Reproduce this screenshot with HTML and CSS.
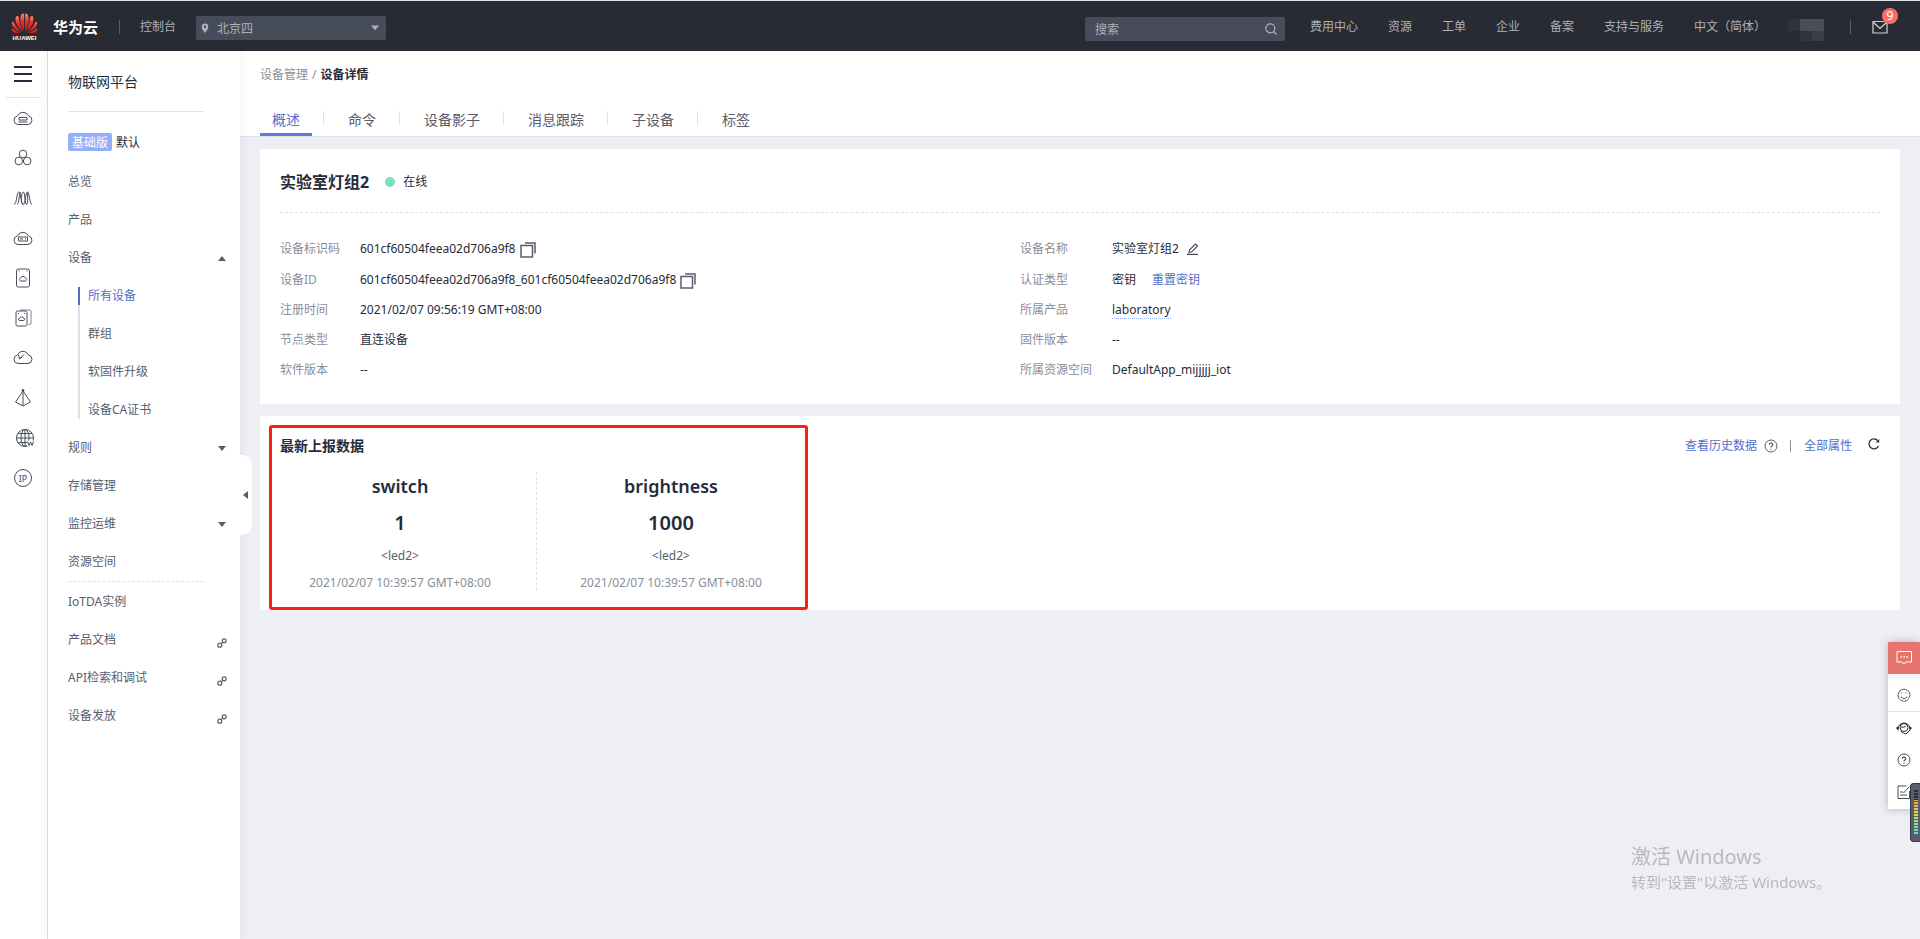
FILE: index.html
```html
<!DOCTYPE html>
<html lang="zh-CN">
<head>
<meta charset="utf-8">
<title>设备详情 - 物联网平台</title>
<link rel="stylesheet" href="styles.css">
</head>
<body>
<svg class="defs" aria-hidden="true">
  <symbol id="i-copy" viewBox="0 0 16 16"><path d="M1 3.500h11.500V15H1zM5 1h10v10.500" fill="none" stroke="#575d6c" stroke-width="1.500"/></symbol>
  <symbol id="i-link" viewBox="0 0 10 10"><g fill="none" stroke="#575d6c" stroke-width="1.200"><circle cx="7.200" cy="2.800" r="2"/><circle cx="2.800" cy="7.200" r="2"/><path d="M3.800 6.200l2.400-2.400"/></g></symbol>
  <symbol id="i-help" viewBox="0 0 14 14"><circle cx="7" cy="7" r="6" fill="none" stroke="currentColor"/><path d="M5.300 5.700a1.700 1.700 0 1 1 2.600 1.400q-.9.500-.9 1.400M7 9.700v1.100" fill="none" stroke="currentColor" stroke-width="1.200"/></symbol>
  <symbol id="i-down" viewBox="0 0 8 5"><path d="M0 0h8L4 5z" fill="currentColor"/></symbol>
  <symbol id="i-up" viewBox="0 0 8 5"><path d="M0 5h8L4 0z" fill="currentColor"/></symbol>
  <symbol id="i-cloud" viewBox="0 0 20 16"><path d="M5 14.500a4.300 4.300 0 0 1-.6-8.500A6 6 0 0 1 15.500 6a4.300 4.300 0 0 1-.5 8.500z"/></symbol>
</svg>

<header class="topbar">
  <a class="brand" href="#">
    <span class="brand-logo">
      <svg class="brand-mark" viewBox="0 0 27 21">
        <defs><linearGradient id="petal" x1="0" y1="0" x2="0" y2="1"><stop offset="0" stop-color="#f58a6c"/><stop offset=".45" stop-color="#e2312a"/><stop offset="1" stop-color="#c9141c"/></linearGradient></defs>
        <g fill="url(#petal)">
          <path d="M13 18.500C9.500 12 8 5 10.500 1.200Q12 .2 13 .7z"/>
          <path d="M14 18.500C17.500 12 19 5 16.500 1.200Q15 .2 14 .7z"/>
          <path d="M12 18.800C6 14 3 8 5.200 3.200Q7 2.500 7.800 4.500C8.500 10 10 14 12 18.800z"/>
          <path d="M15 18.800C21 14 24 8 21.800 3.200Q20 2.500 19.200 4.500C18.500 10 17 14 15 18.800z"/>
          <path d="M11 19.200C5 18 0 14 1 8.500Q2.500 8.800 3.500 10.500C5.500 14.500 8 17 11 19.200z"/>
          <path d="M16 19.200C22 18 27 14 26 8.500Q24.500 8.800 23.500 10.500C21.500 14.500 19 17 16 19.200z"/>
          <path d="M10.500 20H3.500Q1 18.500.5 15.500Q5 18.500 10.500 20z"/>
          <path d="M16.500 20H23.500Q26 18.500 26.500 15.500Q22 18.500 16.500 20z"/>
        </g>
      </svg>
      <span class="brand-word">HUAWEI</span>
    </span>
    <span class="brand-name">华为云</span>
  </a>
  <span class="bar-sep"></span>
  <a class="console" href="#">控制台</a>
  <label class="region">
    <svg class="pin" viewBox="0 0 8 10"><path d="M4 10C2 7.500.7 5.800.7 3.800a3.300 3.300 0 0 1 6.600 0C7.300 5.800 6 7.500 4 10z" fill="#adb0b8"/><circle cx="4" cy="3.800" r="1.200" fill="#464c59"/></svg>
    <select aria-label="区域"><option>北京四</option></select>
    <svg class="caret" aria-hidden="true"><use href="#i-down"/></svg>
  </label>
  <div class="search">
    <input type="text" placeholder="搜索" aria-label="搜索">
    <svg class="search-icon" viewBox="0 0 12 12"><circle cx="5.300" cy="5.300" r="4.500" fill="none" stroke="#adb0b8" stroke-width="1.200"/><path d="M8.500 8.500l3 3" stroke="#adb0b8" stroke-width="1.200"/></svg>
  </div>
  <nav class="topnav">
    <a href="#">费用中心</a><a href="#">资源</a><a href="#">工单</a><a href="#">企业</a><a href="#">备案</a><a href="#">支持与服务</a><a href="#">中文（简体）</a>
  </nav>
  <svg class="account" viewBox="0 0 36 22"><path d="M0 0h12v12H0zM12 12h12v10H12z" fill="#30333b"/><path d="M12 0h24v12H12z" fill="#4b4e56"/><path d="M24 12h12v10H24z" fill="#3b3e46"/></svg>
  <span class="bar-sep"></span>
  <button class="mail" aria-label="消息">
    <svg viewBox="0 0 16 14"><path d="M1 1.500h14v11.500H1zM1 2l7 6.500L15 2" fill="none" stroke="#d0d2d8" stroke-width="1.200"/></svg>
    <span class="badge">9</span>
  </button>
</header>

<div class="layout">
  <nav class="rail" aria-label="服务列表">
    <button class="burger" aria-label="菜单"><svg viewBox="0 0 18 16"><path d="M0 1h18M0 8h18M0 15h18" stroke="#252b3a" stroke-width="2"/></svg></button>
    <a href="#" aria-label="弹性云服务器"><svg viewBox="0 0 20 20"><use href="#i-cloud" y="2" width="20" height="16"/><path d="M6 9.500h8v2.500H6zM5.500 14h9"/></svg></a>
    <a href="#" aria-label="容器"><svg viewBox="0 0 20 20"><circle cx="10" cy="6" r="3.800"/><circle cx="5.800" cy="13" r="3.800"/><circle cx="14.200" cy="13" r="3.800"/></svg></a>
    <a href="#" aria-label="弹性伸缩"><svg viewBox="0 0 20 20"><path d="M1 16.500C4 16 3.500 4 5.800 4S8 16.500 10.200 16.500 12.500 4 14.500 4 16.500 16 19 16.500"/><path d="M4 16.500C6.500 16 5.800 4 8 4M9.800 16.500C7.500 16 8 4 10.200 4S11.500 16.500 13.500 16.500 14 4 15 4"/></svg></a>
    <a href="#" aria-label="裸金属服务器"><svg viewBox="0 0 20 20"><use href="#i-cloud" y="2" width="20" height="16"/><path d="M5.500 9h9v4h-9zM7 11h3M12 11h1"/></svg></a>
    <a href="#" aria-label="云硬盘"><svg viewBox="0 0 20 20"><rect x="3.500" y="1" width="13" height="18" rx="2"/><path d="M7.500 13a1.600 1.600 0 0 1 0-3 2.700 2.700 0 0 1 5 0 1.600 1.600 0 0 1 0 3zM5.500 3h1M13.500 3h1"/></svg></a>
    <a href="#" aria-label="云备份"><svg viewBox="0 0 20 20"><rect x="3" y="3" width="11" height="15" rx="1.500"/><path d="M7 2h9.500a1.500 1.500 0 0 1 1.500 1.500V15a1.500 1.500 0 0 1-1.500 1.500h-1" opacity=".7"/><path d="M6.800 12.500a1.200 1.200 0 0 1 0-2.400 1.900 1.900 0 0 1 3.600 0 1.200 1.200 0 0 1 0 2.400zM5 5.500h1M11 5.500h1"/></svg></a>
    <a href="#" aria-label="云数据库"><svg viewBox="0 0 20 20"><use href="#i-cloud" y="1" width="20" height="16"/><path d="M5.500 7l1 4L11 6.500M6.500 11L9 9"/></svg></a>
    <a href="#" aria-label="虚拟私有云"><svg viewBox="0 0 20 20"><path d="M10 3L2.500 14l7.500 4 7.500-4zM10 3v15"/><circle cx="10" cy="2.500" r="1" fill="#464c59"/></svg></a>
    <a class="shifted" href="#" aria-label="域名注册"><svg viewBox="0 0 20 20"><circle cx="10" cy="10" r="8.500"/><ellipse cx="10" cy="10" rx="4" ry="8.500"/><path d="M1.500 10h17M3 5.500h14M3 14.500h9M10 1.500v17"/><path d="M12 12.500h7v6h-7z" fill="#fff" stroke="none"/><path d="M12.500 13.500l1.500 4 1.500-3.500 1.500 3.500 1.500-4"/></svg></a>
    <a href="#" aria-label="弹性公网IP"><svg viewBox="0 0 20 20"><circle cx="10" cy="10" r="8.500"/><text x="10" y="13.500" text-anchor="middle" font-size="9">IP</text></svg></a>
  </nav>

  <aside class="sidebar">
    <h1>物联网平台</h1>
    <div class="edition"><span class="tag">基础版</span>默认</div>
    <nav class="menu">
      <a href="#">总览</a>
      <a href="#">产品</a>
      <a href="#">设备<svg class="arrow"><use href="#i-up"/></svg></a>
      <div class="submenu">
        <a class="current" href="#">所有设备</a>
        <a href="#">群组</a>
        <a href="#">软固件升级</a>
        <a href="#">设备CA证书</a>
      </div>
      <a href="#">规则<svg class="arrow"><use href="#i-down"/></svg></a>
      <a href="#">存储管理</a>
      <a href="#">监控运维<svg class="arrow"><use href="#i-down"/></svg></a>
      <a href="#">资源空间</a>
      <hr>
      <a href="#">IoTDA实例</a>
      <a href="#">产品文档<svg class="ext"><use href="#i-link"/></svg></a>
      <a href="#">API检索和调试<svg class="ext"><use href="#i-link"/></svg></a>
      <a href="#">设备发放<svg class="ext"><use href="#i-link"/></svg></a>
    </nav>
    <button class="collapse" aria-label="收起"><svg viewBox="0 0 5 8"><path d="M5 0v8L0 4z" fill="#575d6c"/></svg></button>
  </aside>

  <main class="main">
    <div class="page-head">
      <div class="crumbs"><a href="#">设备管理</a><span>/</span><strong>设备详情</strong></div>
      <nav class="tabs">
        <a class="active" href="#">概述</a><a href="#">命令</a><a href="#">设备影子</a><a href="#">消息跟踪</a><a href="#">子设备</a><a href="#">标签</a>
      </nav>
    </div>

    <section class="card device">
      <div class="device-head"><h2>实验室灯组2</h2><span class="status">在线</span></div>
      <div class="details">
        <dl>
          <div class="tall"><dt>设备标识码</dt><dd>601cf60504feea02d706a9f8<button aria-label="复制"><svg class="copy"><use href="#i-copy"/></svg></button></dd></div>
          <div><dt>设备ID</dt><dd>601cf60504feea02d706a9f8_601cf60504feea02d706a9f8<button aria-label="复制"><svg class="copy"><use href="#i-copy"/></svg></button></dd></div>
          <div><dt>注册时间</dt><dd>2021/02/07 09:56:19 GMT+08:00</dd></div>
          <div><dt>节点类型</dt><dd>直连设备</dd></div>
          <div><dt>软件版本</dt><dd>--</dd></div>
        </dl>
        <dl class="wide">
          <div class="tall"><dt>设备名称</dt><dd>实验室灯组2<button class="rename" aria-label="编辑"><svg class="edit" viewBox="0 0 12 12"><path d="M2 9.500l.6-2.800L8.500 1l2 2-5.800 5.800zM0 11.300h11" fill="none" stroke="#464c59" stroke-width="1.200"/></svg></button></dd></div>
          <div><dt>认证类型</dt><dd>密钥<a class="reset" href="#">重置密钥</a></dd></div>
          <div><dt>所属产品</dt><dd><a class="dotted" href="#">laboratory</a></dd></div>
          <div><dt>固件版本</dt><dd>--</dd></div>
          <div><dt>所属资源空间</dt><dd>DefaultApp_mijjjjj_iot</dd></div>
        </dl>
      </div>
    </section>

    <section class="card report">
      <div class="latest">
        <h3>最新上报数据</h3>
        <div class="stats">
          <div class="stat"><div class="name">switch</div><div class="value">1</div><div class="service">&lt;led2&gt;</div><div class="time">2021/02/07 10:39:57 GMT+08:00</div></div>
          <div class="stat"><div class="name">brightness</div><div class="value">1000</div><div class="service">&lt;led2&gt;</div><div class="time">2021/02/07 10:39:57 GMT+08:00</div></div>
        </div>
      </div>
      <div class="actions">
        <a href="#">查看历史数据</a>
        <svg class="help"><use href="#i-help"/></svg>
        <span class="pipe"></span>
        <a href="#">全部属性</a>
        <button aria-label="刷新"><svg viewBox="0 0 12 12"><path d="M10.500 8A5 5 0 1 1 9.800 2.600" fill="none" stroke="#252b3a" stroke-width="1.300"/><path d="M11.200 1v3.500H7.700z" fill="#252b3a"/></svg></button>
      </div>
    </section>
  </main>
</div>

<div class="dock">
  <button class="chat" aria-label="咨询"><svg viewBox="0 0 16 16"><path d="M1 1.500h14.500v10.500h-5.500l-2 2-2-2H1z" fill="none" stroke="#fff"/><path d="M4.500 7h1.500M7.500 7H9M10.500 7H12" stroke="#fff" stroke-width="1.500"/></svg></button>
  <div class="tools">
    <button class="face" aria-label="评价"><svg viewBox="0 0 14 14"><path d="M11.500 11.200A6 6 0 1 1 13 7.500" fill="none" stroke="#575d6c"/><path d="M4 8.500a3.200 3.200 0 0 0 6 0M4.500 4.500v1M9 4.500v1M13 7.500l-1.500 3" fill="none" stroke="#575d6c"/></svg></button>
    <button aria-label="客服"><svg class="headset" viewBox="0 0 16 14"><circle cx="8" cy="6.500" r="4" fill="none" stroke="#252b3a"/><path d="M2 8a6 6 0 0 1 12 0M5 10.500q3 2 5 2.500l4-4" fill="none" stroke="#252b3a"/><path d="M0 7l2.500-2v5zM16 7l-2.500-2v5z" fill="#252b3a"/><path d="M5 6q3 1 5-1" fill="none" stroke="#252b3a"/></svg></button>
    <button aria-label="帮助"><svg><use href="#i-help"/></svg></button>
    <button aria-label="反馈"><svg viewBox="0 0 14 14"><path d="M9.500 1H1v12.500h11.500V6M6.500 8L12.500 1.500M3 7h3M3 10h7" fill="none" stroke="#464c59"/></svg></button>
  </div>
</div>
<div class="meter"><span></span></div>
<div class="watermark"><p class="wm-title">激活 Windows</p><p>转到"设置"以激活 Windows。</p></div>
</body>
</html>
```
FILE: styles.css
```css
* { box-sizing: border-box; }
body, h1, h2, h3, p, dl, dd { margin: 0; }
body {
  min-height: 100vh;
  display: flex;
  flex-direction: column;
  background: #eeeff5;
  color: #252b3a;
  font: 12px/18px "Noto Sans", "Noto Sans CJK SC", sans-serif;
}
a { color: inherit; text-decoration: none; }
button { display: flex; padding: 0; border: 0; background: none; color: inherit; font: inherit; }
svg { display: block; flex: none; }
.defs { position: absolute; width: 0; height: 0; }

/* top bar */
.topbar {
  display: flex;
  align-items: center;
  height: 51px;
  padding: 2px 32px 0 11px;
  border-top: 1px solid #dfe5e5;
  background: #282b33;
  color: #adb0b8;
}
.topbar > * { flex: none; }
.brand { display: flex; align-items: center; gap: 15px; }
.brand-logo { display: flex; flex-direction: column; align-items: center; width: 27px; }
.brand-mark { width: 27px; height: 21px; }
.brand-word { color: #fff; font: 700 6px/8px "Liberation Sans", sans-serif; }
.brand-name { color: #fff; font-size: 15px; font-weight: 700; }
.bar-sep { width: 1px; height: 14px; background: #575d6c; }
.brand + .bar-sep { margin: 0 20px 0 21px; }
.region {
  position: relative;
  display: flex;
  align-items: center;
  width: 190px;
  height: 24px;
  margin: 2px 0 0 20px;
  padding-left: 5px;
  border-radius: 2px;
  background: #464c59;
}
.pin { width: 8px; height: 10px; }
.region select {
  flex: 1;
  height: 24px;
  padding: 2px 0 0 8px;
  appearance: none;
  border: 0;
  background: none;
  color: #adb0b8;
  font: inherit;
}
.caret { position: absolute; right: 7px; width: 8px; height: 6px; }
.search {
  display: flex;
  align-items: center;
  width: 200px;
  height: 24px;
  margin: 4px 25px 0 auto;
  padding: 0 8px 0 10px;
  border-radius: 2px;
  background: #464c59;
}
.search input { flex: 1; min-width: 0; padding: 2px 0 0; border: 0; outline: 0; background: none; color: inherit; font: inherit; }
.search input::placeholder { color: #adb0b8; }
.search-icon { width: 12px; height: 12px; }
.topnav { display: flex; gap: 30px; }
.account { width: 36px; height: 22px; margin: 6px 26px 0 22px; }
.mail { position: relative; margin-left: 21px; }
.mail svg { width: 16px; height: 14px; }
.badge {
  position: absolute;
  top: -12px;
  right: -10px;
  width: 16px;
  height: 16px;
  border-radius: 8px;
  background: #f66f6a;
  color: #fff;
  line-height: 16px;
  text-align: center;
}

/* columns */
.layout { display: flex; flex: 1; }
.rail {
  display: flex;
  flex: none;
  flex-direction: column;
  align-items: center;
  width: 48px;
  padding-right: 1px;
  border-right: 1px solid #dfe1e6;
  background: #fff;
}
.burger { justify-content: center; width: 35px; height: 47px; padding-top: 15px; border-bottom: 1px solid #dfe1e6; }
.burger svg { width: 18px; height: 16px; }
.rail a { display: flex; align-items: center; height: 40px; }
.rail a svg { width: 20px; height: 20px; fill: none; stroke: #464c59; }
.rail text { fill: #464c59; stroke: none; }
.rail .shifted { padding-left: 4px; }
.sidebar {
  position: relative;
  flex: none;
  width: 192px;
  padding: 0 14px 0 20px;
  background: #fff;
  box-shadow: 0 0 10px rgba(37, 43, 58, .08);
}
.sidebar h1 { width: 136px; height: 61px; padding-top: 20px; border-bottom: 1px solid #dfe1e6; font-size: 14px; font-weight: 400; line-height: 22px; }
.edition { display: flex; gap: 4px; margin-top: 21px; line-height: 20px; }
.tag { height: 18px; padding: 0 4px; border-radius: 2px; background: #96adfa; color: #fff; }
.menu { padding-top: 10px; color: #575d6c; }
.menu a { display: flex; align-items: center; justify-content: space-between; height: 38px; }
.menu hr { width: 136px; margin: 0 0 1px; border: 0; border-top: 1px dashed #dfe1e6; }
.arrow { width: 8px; height: 5px; }
.ext { width: 10px; height: 10px; margin: 6px -1px 0 0; }
.submenu { position: relative; padding-left: 20px; }
.submenu::before { content: ""; position: absolute; left: 10px; top: 10px; bottom: 10px; width: 2px; background: #dfe1e6; }
.submenu .current { color: #526ecc; }
.submenu .current::before { content: ""; position: absolute; left: 10px; top: 10px; width: 2px; height: 18px; background: #526ecc; }
.collapse {
  position: absolute;
  top: 404px;
  left: 192px;
  align-items: center;
  justify-content: center;
  width: 12px;
  height: 80px;
  padding-right: 2px;
  border-radius: 0 10px 10px 0;
  background: #fff;
}
.collapse svg { width: 5px; height: 8px; }

/* page header */
.main { flex: 1; min-width: 0; }
.page-head { padding: 15px 20px 0; border-bottom: 1px solid #dfe1e6; background: #fff; }
.crumbs { display: flex; gap: 4px; color: #8a8e99; }
.crumbs strong { color: #252b3a; }
.tabs { display: flex; margin-top: 22px; color: #575d6c; font-size: 14px; line-height: 28px; }
.tabs a { display: flex; align-items: center; height: 30px; padding: 0 12px; border-bottom: 3px solid transparent; }
.tabs a + a::before { content: ""; width: 1px; height: 14px; margin: -4px 24px 0 -1px; background: #dfe1e6; }
.tabs .active { color: #526ecc; border-bottom-color: #5e7ce0; }

/* cards */
.card { margin: 12px 20px 0; background: #fff; }
.device { padding: 18px 20px 19px; }
.device-head { display: flex; align-items: center; height: 46px; padding-bottom: 16px; border-bottom: 1px dashed #dfe1e6; }
.device-head h2 { font-size: 16px; line-height: 24px; }
.status { display: flex; align-items: center; gap: 8px; margin-left: 16px; line-height: 20px; }
.status::before { content: ""; width: 10px; height: 10px; border-radius: 5px; background: #7adfbf; }
.details { display: grid; grid-template-columns: 740px 1fr; padding-top: 21px; }
.details dl > div { display: grid; grid-template-columns: 80px 1fr; align-items: center; height: 30px; line-height: 20px; }
.details .wide > div { grid-template-columns: 92px 1fr; }
.details .tall { margin-bottom: 1px; }
.details dt { color: #8a8e99; }
.details dd { display: flex; align-items: center; gap: 4px; }
.copy { width: 16px; height: 16px; margin-top: 2px; }
.rename { margin-left: 4px; }
.edit { width: 12px; height: 12px; }
.reset { margin-left: 12px; color: #526ecc; }
.dotted { border-bottom: 1px dotted #96adfa; line-height: 16px; }
.report { display: flex; align-items: flex-start; justify-content: space-between; padding: 9px 20px 0 9px; }
.latest { width: 539px; padding: 6px 0 17px; border: 3px solid #fc2010; border-radius: 3px; }
.latest h3 { padding-left: 8px; font-size: 14px; line-height: 24px; }
.stats { display: grid; grid-template-columns: 265px 1fr; margin-top: 14px; text-align: center; }
.stat:first-child { padding-right: 8px; border-right: 1px dashed #dfe1e6; }
.name { font-size: 18px; font-weight: 600; line-height: 28px; }
.value { margin-top: 8px; font-size: 20px; font-weight: 600; line-height: 30px; }
.service { margin-top: 10px; color: #575d6c; line-height: 16px; }
.time { margin-top: 12px; color: #8a8e99; line-height: 14px; }
.actions { display: flex; align-items: center; margin-top: 12px; color: #526ecc; }
.help { width: 14px; height: 14px; margin-left: 7px; color: #575d6c; }
.pipe { width: 1px; height: 12px; margin: 0 13px 0 12px; background: #8a8e99; }
.actions button { margin: -4px 0 0 16px; }
.actions button svg { width: 12px; height: 12px; }

/* floating tools */
.dock { position: fixed; right: 0; top: 642px; width: 32px; background: #f4f5f8; box-shadow: 0 0 8px rgba(37, 43, 58, .3); }
.dock button { align-items: center; justify-content: center; width: 32px; height: 32px; color: #464c59; }
.dock svg { width: 14px; height: 14px; }
.dock .chat { background: #e6756e; }
.dock .chat svg { width: 16px; height: 16px; }
.tools { margin-top: 5px; padding-bottom: 1px; background: #fff; }
.tools .face { height: 33px; border-bottom: 1px solid #dfe1e6; }
.dock .headset { width: 16px; }
.meter { position: fixed; right: 0; top: 783px; width: 10px; height: 59px; padding: 6px 2px 6px 3px; border: 1px solid #343846; border-right: 0; border-radius: 4px 0 0 4px; background: #575d6c; }
.meter span {
  display: block;
  height: 45px;
  background: repeating-linear-gradient(transparent 0 2px, #575d6c 2px 3px), linear-gradient(#2a2d35 0 22%, #f2a04a 23%, #e8dc4e 50%, #9be08a 72%, #4fe3cf);
}
.watermark { position: fixed; left: 1631px; top: 843px; color: #b7b9bd; font-size: 15px; line-height: 22px; }
.wm-title { font-size: 20px; line-height: 28px; }
```
